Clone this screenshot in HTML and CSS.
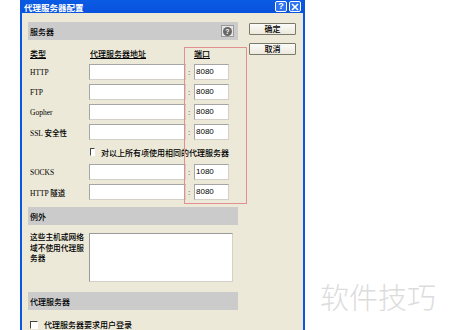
FILE: index.html
```html
<!DOCTYPE html>
<html lang="zh">
<head>
<meta charset="utf-8">
<link rel="stylesheet" href="styles.css">
</head>
<body>
<div class="window">
  <div class="titlebar">
    <span class="title">代理服务器配置</span>
    <span class="tbtns">
      <span class="tbtn">?</span>
      <span class="tbtn close">
        <svg width="8" height="8" viewBox="0 0 8 8"><path d="M1 1 L7 7 M7 1 L1 7" stroke="#fff" stroke-width="1.6"/></svg>
      </span>
    </span>
  </div>
  <div class="client">
    <div class="main">
      <div class="bar bar-first">
        <span>服务器</span>
        <span class="help"><span class="help-circle">?</span></span>
      </div>
      <div class="grid">
        <span class="hdr">类型</span>
        <span class="hdr">代理服务器地址</span>
        <span></span>
        <span class="hdr port-hdr">端口</span>

        <span class="lbl">HTTP</span><span class="inp"></span><span class="colon">:</span><span class="inp port">8080</span>
        <span class="lbl">FTP</span><span class="inp"></span><span class="colon">:</span><span class="inp port">8080</span>
        <span class="lbl">Gopher</span><span class="inp"></span><span class="colon">:</span><span class="inp port">8080</span>
        <span class="lbl">SSL 安全性</span><span class="inp"></span><span class="colon">:</span><span class="inp port">8080</span>

        <span></span>
        <span class="chkrow span3"><span class="chk"></span>对以上所有项使用相同的代理服务器</span>

        <span class="lbl">SOCKS</span><span class="inp"></span><span class="colon">:</span><span class="inp port">1080</span>
        <span class="lbl">HTTP 隧道</span><span class="inp"></span><span class="colon">:</span><span class="inp port">8080</span>
      </div>
      <div class="bar bar-ex"><span>例外</span></div>
      <div class="except">
        <span class="ex-lbl">这些主机或网络域不使用代理服务器</span>
        <span class="textarea"></span>
      </div>
      <div class="bar bar-proxy"><span>代理服务器</span></div>
      <div class="chkrow login"><span class="chk"></span>代理服务器要求用户登录</div>
    </div>
    <div class="side">
      <span class="btn">确定</span>
      <span class="btn">取消</span>
    </div>
    <div class="redbox"></div>
  </div>
</div>
<div class="watermark">软件技巧</div>
</body>
</html>
```
FILE: styles.css
```css
html, body { margin: 0; padding: 0; }
body {
  width: 450px;
  height: 330px;
  overflow: hidden;
  background: #fff;
  position: relative;
  font-family: "Noto Sans CJK SC", sans-serif;
  color: #000;
}
.window {
  margin-left: 20px;
  width: 285px;
  height: 360px;
  background: #0a56e0;
  padding: 0 2px;
  box-sizing: border-box;
  display: flex;
  flex-direction: column;
}
.titlebar {
  height: 13px;
  display: flex;
  align-items: center;
  justify-content: space-between;
  background: linear-gradient(#0b5be4, #0852dc);
}
.title {
  color: #fff;
  font-weight: bold;
  font-size: 8.5px;
  line-height: 12px;
  padding-left: 2px;
}
.tbtns { display: flex; gap: 2px; padding-right: 2px; }
.tbtn {
  width: 12px;
  height: 11px;
  box-sizing: border-box;
  border: 1px solid #fff;
  border-radius: 2px;
  background: #2f73ef;
  color: #fff;
  font: bold 9px/9px "Liberation Sans", sans-serif;
  display: flex;
  align-items: center;
  justify-content: center;
}
.client {
  flex: 1;
  background: #ece9d8;
  display: flex;
  position: relative;
}
.main {
  width: 210px;
  padding-left: 6px;
  padding-top: 9px;
  display: flex;
  flex-direction: column;
}
.bar {
  height: 18px;
  background: #cbcbcb;
  display: flex;
  align-items: center;
  justify-content: space-between;
  padding-left: 2px;
  padding-right: 4px;
  font-size: 8px;
  font-weight: 500;
}
.help {
  width: 13px;
  height: 12px;
  box-sizing: border-box;
  border: 1px solid #9a9a9a;
  background: #e6e6e6;
  display: flex;
  align-items: center;
  justify-content: center;
}
.help-circle {
  width: 9px;
  height: 9px;
  border-radius: 50%;
  background: #666;
  color: #fff;
  font: bold 7px/9px "Liberation Sans", sans-serif;
  text-align: center;
}
.grid {
  display: grid;
  grid-template-columns: 61px 97px 8px 35px;
  grid-template-rows: 13px;
  grid-auto-rows: 16px;
  row-gap: 4px;
  margin-top: 7px;
  align-items: center;
}
.hdr {
  font-size: 8px;
  font-weight: 500;
  text-decoration: underline;
  line-height: 11px;
  padding-left: 2px;
}
.grid .hdr:nth-child(2) { padding-left: 1px; }
.port-hdr { padding-left: 0; }
.lbl {
  font-family: "Liberation Serif", "Noto Sans CJK SC", serif;
  font-size: 7.5px;
  font-weight: 500;
  padding-left: 2px;
  white-space: nowrap;
}
.inp {
  height: 16px;
  box-sizing: border-box;
  background: #fff;
  border: 1px solid;
  border-color: #a5a5a5 #d4d0c8 #d4d0c8 #a5a5a5;
}
.port {
  font-family: "Liberation Sans", sans-serif;
  font-size: 8px;
  line-height: 13px;
  padding-left: 1px;
}
.colon {
  font-size: 8px;
  font-family: "Liberation Sans", sans-serif;
  padding-left: 2px;
  color: #444;
}
.span3 { grid-column: span 3; }
.chkrow {
  display: flex;
  align-items: center;
  gap: 6px;
  font-size: 8px;
  font-weight: 500;
  white-space: nowrap;
}
.chk {
  width: 6px;
  height: 6px;
  border-top: 1px solid #444;
  border-left: 1px solid #444;
  border-right: 1px solid #fff;
  border-bottom: 1px solid #fff;
  background: #fff;
}
.grid .chkrow { padding-left: 1px; }
.bar-ex { margin-top: 7px; }
.except {
  display: flex;
  margin-top: 8px;
}
.ex-lbl {
  width: 56px;
  padding-left: 2px;
  padding-right: 3px;
  font-size: 7.7px;
  font-weight: 500;
  line-height: 10.5px;
  margin-top: -1px;
}
.textarea {
  width: 144px;
  height: 49px;
  box-sizing: border-box;
  background: #fff;
  border: 1px solid;
  border-color: #9a9a9a #d4d0c8 #d4d0c8 #9a9a9a;
}
.bar-proxy { margin-top: 10px; }
.login { margin-top: 9px; padding-left: 2px; gap: 6px; }
.side {
  display: flex;
  flex-direction: column;
  gap: 8px;
  padding-top: 10px;
  padding-left: 11px;
}
.btn {
  width: 47px;
  height: 12px;
  box-sizing: border-box;
  border: 1px solid #7a7a6a;
  border-radius: 1px;
  background: linear-gradient(#fbfbf8, #ece9dc);
  font-size: 8px;
  font-weight: 500;
  line-height: 10px;
  text-align: center;
}
.redbox {
  position: absolute;
  left: 162px;
  top: 34px;
  width: 63px;
  height: 157px;
  box-sizing: border-box;
  border: 1px solid #e09090;
}
.watermark {
  position: absolute;
  left: 320px;
  top: 279px;
  font-size: 29px;
  line-height: 34px;
  color: #dcdcdc;
  font-family: "Noto Sans CJK SC", sans-serif;
  font-weight: 300;
}
```
